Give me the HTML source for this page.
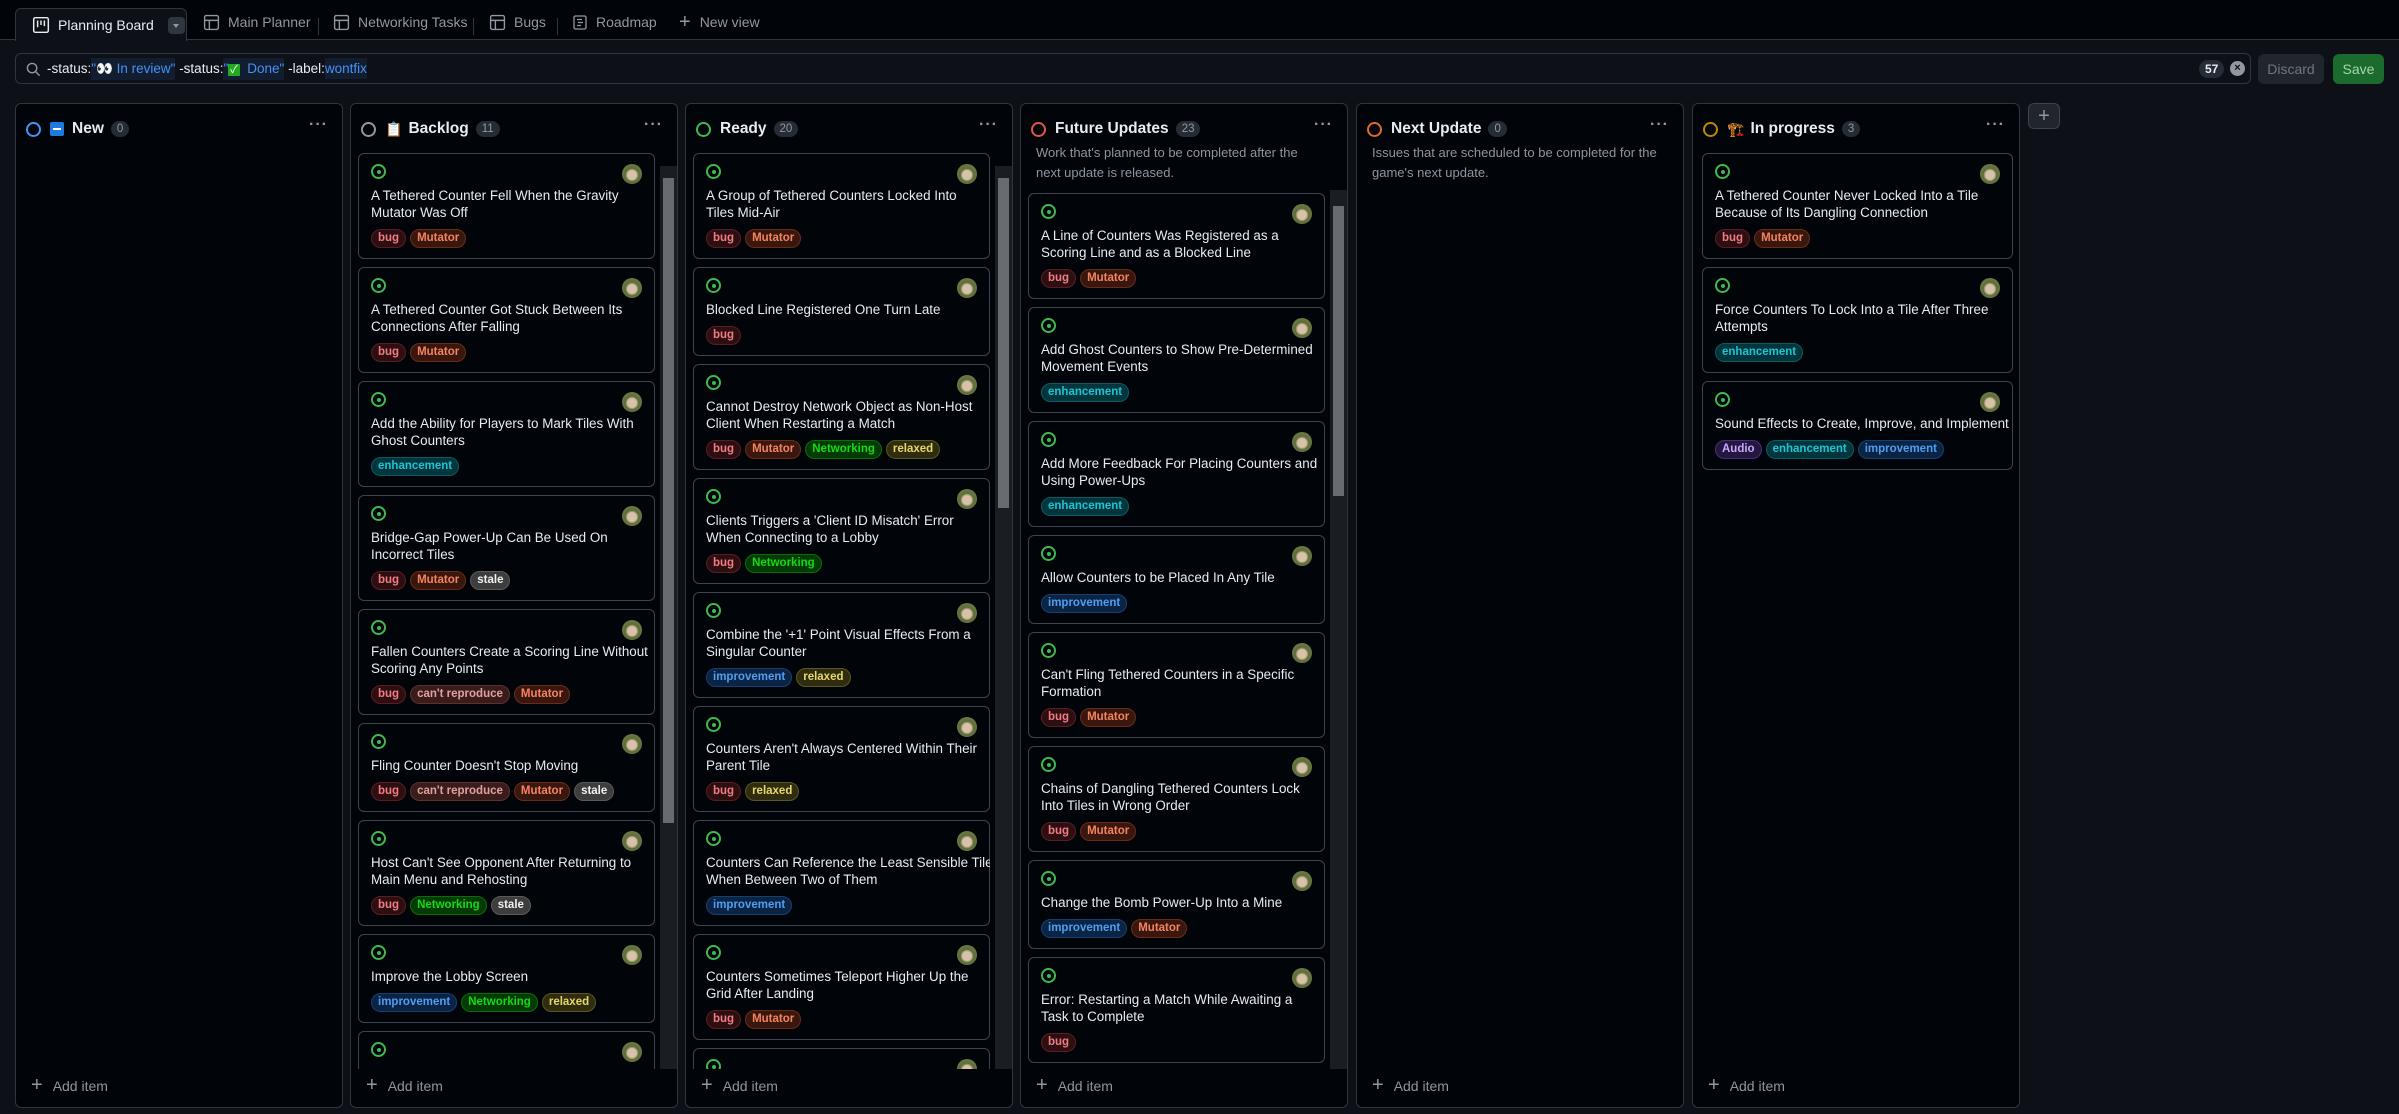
<!DOCTYPE html>
<html><head><meta charset="utf-8"><style>
*{box-sizing:border-box;margin:0;padding:0}
body{width:2399px;height:1114px;background:#0d1117;font-family:"Liberation Sans","Noto Sans CJK JP",sans-serif;color:#e6edf3;position:relative;overflow:hidden}
.top{position:absolute;left:0;top:0;width:2399px;height:40px;background:#010409;border-bottom:1px solid #30363d}
.tab{position:absolute;top:2px;height:40px;display:flex;align-items:center;font-size:14px;color:#9198a1;white-space:nowrap}
.tab svg{margin-right:8px}
.active{left:15px;top:8px;height:33px;width:172px;background:#0d1117;border:1px solid #30363d;border-bottom:none;border-radius:6px 6px 0 0;padding-left:16px;color:#e6edf3}
.sep{position:absolute;top:18px;width:1px;height:17px;background:#30363d}
.search{position:absolute;left:15px;top:53px;width:2236px;height:31px;border:1px solid #30363d;border-radius:6px;background:#0d1117;font-size:13.5px;display:flex;align-items:center;padding-left:31px;white-space:pre;color:#e6edf3}
.tok{background:#121d2f;color:#4493f8;padding:3px 0}
.btn{position:absolute;top:54px;height:30px;border-radius:6px;font-size:14px;display:flex;align-items:center;justify-content:center}
.col{position:absolute;top:103px;width:328px;height:1005px;background:#010409;border:1px solid #30363d;border-radius:6px;overflow:hidden}
.hd{position:absolute;left:10px;top:17px;height:16px;display:flex;align-items:center;font-size:15.5px;font-weight:bold;white-space:nowrap}
.ring{width:15px;height:15px;border-radius:50%;border:2px solid;margin-right:9px;flex:none}
.cnt{display:inline-block;font-size:11.5px;font-weight:normal;color:#9198a1;background:#262c36;border-radius:10px;padding:2px 6px;margin-left:7px}
.dots{position:absolute;right:14px;top:12px;color:#9198a1;font-size:16px;letter-spacing:1px;font-weight:bold}
.desc{position:absolute;left:15px;top:39px;font-size:13px;line-height:20px;color:#8d96a0;white-space:nowrap}
.list{position:absolute;left:7px;bottom:38px;overflow:hidden}
.card{position:relative;background:#010409;border:1px solid #3d444d;border-radius:6px;padding:10px 12px 10px 12px;margin-bottom:8px}
.ico{width:15px;height:15px;border:2px solid #3fb950;border-radius:50%;position:relative;margin-bottom:8px}
.ico:after{content:"";position:absolute;left:3.5px;top:3.5px;width:4px;height:4px;border-radius:50%;background:#3fb950}
.av{position:absolute;right:12px;top:10px;width:20px;height:20px;border-radius:50%;background:radial-gradient(circle at 50% 55%,#d8c2a8 0 30%,#5d6b3a 45%,#7b8c4a 100%)}
.t{font-size:13.4px;line-height:17px;white-space:nowrap;color:#e6edf3}
.lb{margin-top:8px;display:flex;gap:4px;height:19px}
.l{font-size:11.5px;font-weight:bold;height:19px;line-height:17px;padding:0 6px;border-radius:10px;border:1px solid}
.bug{background:#2d0f12;border-color:#5c1d22;color:#f47b86}
.mut{background:#3a170e;border-color:#6b2b17;color:#f4845f}
.net{background:#043b04;border-color:#086f08;color:#16d916}
.rel{background:#2f2c10;border-color:#5c5620;color:#e6d86a}
.imp{background:#0b2444;border-color:#153f73;color:#4f9ef2}
.enh{background:#03363c;border-color:#075c66;color:#1cc4d6}
.aud{background:#25163f;border-color:#4a2d7a;color:#c8a8ff}
.sta{background:#3d3d3d;border-color:#5a5a5a;color:#f0f0f0}
.cr{background:#3a1c1c;border-color:#5e3030;color:#e0a0a0}
.sb{position:absolute;top:5px;bottom:38px;width:17px;background:#1a1d22}
.thumb{position:absolute;left:3px;right:3px;background:#686b70}
.add{position:absolute;left:15px;bottom:10px;font-size:14px;color:#8d96a0;display:flex;align-items:center}
.add b{font-weight:normal;font-size:20px;margin-right:10px;color:#9198a1}
</style></head><body>
<div class="top">
 <div class="tab active"><svg width="18" height="18" viewBox="0 0 16 16"><rect x="1.5" y="1.5" width="13" height="13" rx="1.5" fill="none" stroke="#e6edf3" stroke-width="1.3"/><path d="M5 4v6M8 4v4M11 4v5" stroke="#e6edf3" stroke-width="1.3"/></svg>Planning Board<span style="margin-left:14px;width:17px;height:17px;background:#30363d;border-radius:4px;display:inline-block;position:relative"><span style="position:absolute;left:5px;top:7px;border:3.5px solid transparent;border-top:4px solid #9198a1"></span></span></div>
 <div class="tab" style="left:203px"><svg width="17" height="17" viewBox="0 0 16 16" fill="none" stroke="#9198a1" stroke-width="1.3"><rect x="1.5" y="1.5" width="13" height="13" rx="1.5"/><path d="M1.5 6h13M6 6v8.5"/></svg>Main Planner</div>
 <div class="sep" style="left:318px"></div>
 <div class="tab" style="left:333px"><svg width="17" height="17" viewBox="0 0 16 16" fill="none" stroke="#9198a1" stroke-width="1.3"><rect x="1.5" y="1.5" width="13" height="13" rx="1.5"/><path d="M1.5 6h13M6 6v8.5"/></svg>Networking Tasks</div>
 <div class="sep" style="left:473px"></div>
 <div class="tab" style="left:489px"><svg width="17" height="17" viewBox="0 0 16 16" fill="none" stroke="#9198a1" stroke-width="1.3"><rect x="1.5" y="1.5" width="13" height="13" rx="1.5"/><path d="M1.5 6h13M6 6v8.5"/></svg>Bugs</div>
 <div class="sep" style="left:557px"></div>
 <div class="tab" style="left:572px"><svg width="16" height="17" viewBox="0 0 16 16" fill="none" stroke="#9198a1" stroke-width="1.3"><rect x="2" y="1.5" width="12" height="13" rx="1.5"/><path d="M5 5h5M6 8h5M5 11h4"/></svg>Roadmap</div>
 <div class="tab" style="left:679px;color:#9198a1"><span style="font-size:20px;margin-right:9px">+</span>New view</div>
</div>
<div class="search"><svg style="position:absolute;left:10px;top:8px" width="15" height="15" viewBox="0 0 16 16" fill="none" stroke="#9198a1" stroke-width="1.5"><circle cx="6.5" cy="6.5" r="5"/><path d="M10.5 10.5l4 4"/></svg>-status:<span class="tok">"👀 In review"</span> -status:<span class="tok">"<span style="background:#22aa22;color:#fff;font-size:11px;padding:0 2px">✓</span>  Done"</span> -label:<span class="tok">wontfix</span>
 <span style="position:absolute;left:2183px;top:6px;font-size:12px;font-weight:bold;background:#262c36;border-radius:10px;padding:2px 6px">57</span>
 <span style="position:absolute;left:2214px;top:7px;width:15px;height:15px;border-radius:50%;background:#9198a1;color:#0d1117;font-size:11px;font-weight:bold;text-align:center;line-height:15px">×</span>
</div>
<div class="btn" style="left:2258px;width:66px;background:#21262d;color:#6e7681">Discard</div>
<div class="btn" style="left:2333px;width:51px;background:#1a6b2d;color:#a8d5b0">Save</div>
<div class="btn" style="left:2028px;top:103px;width:32px;height:26px;background:#21262d;border:1px solid #3d444d;color:#9198a1;font-size:20px">+</div>

<div class="col" style="left:15px">
 <div class="hd"><span class="ring" style="border-color:#4493f8"></span><span style="width:14px;height:14px;background:#1f7ae0;border-radius:2px;margin-right:8px;position:relative"><span style="position:absolute;left:3px;top:6px;width:8px;height:2px;background:#fff"></span></span>New<span class="cnt">0</span></div><div class="dots">···</div>
 <div class="add"><b>+</b>Add item</div>
</div>

<div class="col" style="left:350px">
 <div class="hd"><span class="ring" style="border-color:#9198a1"></span><span style="font-size:14px;margin-right:6px">📋</span>Backlog<span class="cnt">11</span></div><div class="dots">···</div>
 <div class="sb" style="left:309px;top:62px"><div class="thumb" style="top:12px;height:645px"></div></div>
 <div class="list" style="top:49px;width:297px">
  <div class="card"><div class="ico"></div><div class="av"></div><div class="t">A Tethered Counter Fell When the Gravity<br>Mutator Was Off</div><div class="lb"><span class="l bug">bug</span><span class="l mut">Mutator</span></div></div>
  <div class="card"><div class="ico"></div><div class="av"></div><div class="t">A Tethered Counter Got Stuck Between Its<br>Connections After Falling</div><div class="lb"><span class="l bug">bug</span><span class="l mut">Mutator</span></div></div>
  <div class="card"><div class="ico"></div><div class="av"></div><div class="t">Add the Ability for Players to Mark Tiles With<br>Ghost Counters</div><div class="lb"><span class="l enh">enhancement</span></div></div>
  <div class="card"><div class="ico"></div><div class="av"></div><div class="t">Bridge-Gap Power-Up Can Be Used On<br>Incorrect Tiles</div><div class="lb"><span class="l bug">bug</span><span class="l mut">Mutator</span><span class="l sta">stale</span></div></div>
  <div class="card"><div class="ico"></div><div class="av"></div><div class="t">Fallen Counters Create a Scoring Line Without<br>Scoring Any Points</div><div class="lb"><span class="l bug">bug</span><span class="l cr">can't reproduce</span><span class="l mut">Mutator</span></div></div>
  <div class="card"><div class="ico"></div><div class="av"></div><div class="t">Fling Counter Doesn't Stop Moving</div><div class="lb"><span class="l bug">bug</span><span class="l cr">can't reproduce</span><span class="l mut">Mutator</span><span class="l sta">stale</span></div></div>
  <div class="card"><div class="ico"></div><div class="av"></div><div class="t">Host Can't See Opponent After Returning to<br>Main Menu and Rehosting</div><div class="lb"><span class="l bug">bug</span><span class="l net">Networking</span><span class="l sta">stale</span></div></div>
  <div class="card"><div class="ico"></div><div class="av"></div><div class="t">Improve the Lobby Screen</div><div class="lb"><span class="l imp">improvement</span><span class="l net">Networking</span><span class="l rel">relaxed</span></div></div>
  <div class="card"><div class="ico"></div><div class="av"></div><div class="t">&nbsp;</div></div>
 </div>
 <div class="add"><b>+</b>Add item</div>
</div>

<div class="col" style="left:685px">
 <div class="hd"><span class="ring" style="border-color:#3fb950"></span>Ready<span class="cnt">20</span></div><div class="dots">···</div>
 <div class="sb" style="left:309px;top:62px"><div class="thumb" style="top:12px;height:330px"></div></div>
 <div class="list" style="top:49px;width:297px">
  <div class="card"><div class="ico"></div><div class="av"></div><div class="t">A Group of Tethered Counters Locked Into<br>Tiles Mid-Air</div><div class="lb"><span class="l bug">bug</span><span class="l mut">Mutator</span></div></div>
  <div class="card"><div class="ico"></div><div class="av"></div><div class="t">Blocked Line Registered One Turn Late</div><div class="lb"><span class="l bug">bug</span></div></div>
  <div class="card"><div class="ico"></div><div class="av"></div><div class="t">Cannot Destroy Network Object as Non-Host<br>Client When Restarting a Match</div><div class="lb"><span class="l bug">bug</span><span class="l mut">Mutator</span><span class="l net">Networking</span><span class="l rel">relaxed</span></div></div>
  <div class="card"><div class="ico"></div><div class="av"></div><div class="t">Clients Triggers a 'Client ID Misatch' Error<br>When Connecting to a Lobby</div><div class="lb"><span class="l bug">bug</span><span class="l net">Networking</span></div></div>
  <div class="card"><div class="ico"></div><div class="av"></div><div class="t">Combine the '+1' Point Visual Effects From a<br>Singular Counter</div><div class="lb"><span class="l imp">improvement</span><span class="l rel">relaxed</span></div></div>
  <div class="card"><div class="ico"></div><div class="av"></div><div class="t">Counters Aren't Always Centered Within Their<br>Parent Tile</div><div class="lb"><span class="l bug">bug</span><span class="l rel">relaxed</span></div></div>
  <div class="card"><div class="ico"></div><div class="av"></div><div class="t">Counters Can Reference the Least Sensible Tile<br>When Between Two of Them</div><div class="lb"><span class="l imp">improvement</span></div></div>
  <div class="card"><div class="ico"></div><div class="av"></div><div class="t">Counters Sometimes Teleport Higher Up the<br>Grid After Landing</div><div class="lb"><span class="l bug">bug</span><span class="l mut">Mutator</span></div></div>
  <div class="card"><div class="ico"></div><div class="av"></div><div class="t">&nbsp;</div></div>
 </div>
 <div class="add"><b>+</b>Add item</div>
</div>

<div class="col" style="left:1020px">
 <div class="hd"><span class="ring" style="border-color:#e5534b"></span>Future Updates<span class="cnt">23</span></div><div class="dots">···</div>
 <div class="desc">Work that's planned to be completed after the<br>next update is released.</div>
 <div class="sb" style="left:309px;top:86px"><div class="thumb" style="top:16px;height:290px"></div></div>
 <div class="list" style="top:89px;width:297px">
  <div class="card"><div class="ico"></div><div class="av"></div><div class="t">A Line of Counters Was Registered as a<br>Scoring Line and as a Blocked Line</div><div class="lb"><span class="l bug">bug</span><span class="l mut">Mutator</span></div></div>
  <div class="card"><div class="ico"></div><div class="av"></div><div class="t">Add Ghost Counters to Show Pre-Determined<br>Movement Events</div><div class="lb"><span class="l enh">enhancement</span></div></div>
  <div class="card"><div class="ico"></div><div class="av"></div><div class="t">Add More Feedback For Placing Counters and<br>Using Power-Ups</div><div class="lb"><span class="l enh">enhancement</span></div></div>
  <div class="card"><div class="ico"></div><div class="av"></div><div class="t">Allow Counters to be Placed In Any Tile</div><div class="lb"><span class="l imp">improvement</span></div></div>
  <div class="card"><div class="ico"></div><div class="av"></div><div class="t">Can't Fling Tethered Counters in a Specific<br>Formation</div><div class="lb"><span class="l bug">bug</span><span class="l mut">Mutator</span></div></div>
  <div class="card"><div class="ico"></div><div class="av"></div><div class="t">Chains of Dangling Tethered Counters Lock<br>Into Tiles in Wrong Order</div><div class="lb"><span class="l bug">bug</span><span class="l mut">Mutator</span></div></div>
  <div class="card"><div class="ico"></div><div class="av"></div><div class="t">Change the Bomb Power-Up Into a Mine</div><div class="lb"><span class="l imp">improvement</span><span class="l mut">Mutator</span></div></div>
  <div class="card"><div class="ico"></div><div class="av"></div><div class="t">Error: Restarting a Match While Awaiting a<br>Task to Complete</div><div class="lb"><span class="l bug">bug</span></div></div>
 </div>
 <div class="add"><b>+</b>Add item</div>
</div>

<div class="col" style="left:1356px">
 <div class="hd"><span class="ring" style="border-color:#db6d28"></span>Next Update<span class="cnt">0</span></div><div class="dots">···</div>
 <div class="desc">Issues that are scheduled to be completed for the<br>game's next update.</div>
 <div class="add"><b>+</b>Add item</div>
</div>

<div class="col" style="left:1692px">
 <div class="hd"><span class="ring" style="border-color:#bf8700"></span><span style="font-size:14px;margin-right:6px">🏗️</span>In progress<span class="cnt">3</span></div><div class="dots">···</div>
 <div class="list" style="top:49px;width:311px;left:9px">
  <div class="card"><div class="ico"></div><div class="av"></div><div class="t">A Tethered Counter Never Locked Into a Tile<br>Because of Its Dangling Connection</div><div class="lb"><span class="l bug">bug</span><span class="l mut">Mutator</span></div></div>
  <div class="card"><div class="ico"></div><div class="av"></div><div class="t">Force Counters To Lock Into a Tile After Three<br>Attempts</div><div class="lb"><span class="l enh">enhancement</span></div></div>
  <div class="card"><div class="ico"></div><div class="av"></div><div class="t">Sound Effects to Create, Improve, and Implement</div><div class="lb"><span class="l aud">Audio</span><span class="l enh">enhancement</span><span class="l imp">improvement</span></div></div>
 </div>
 <div class="add"><b>+</b>Add item</div>
</div>
</body></html>
